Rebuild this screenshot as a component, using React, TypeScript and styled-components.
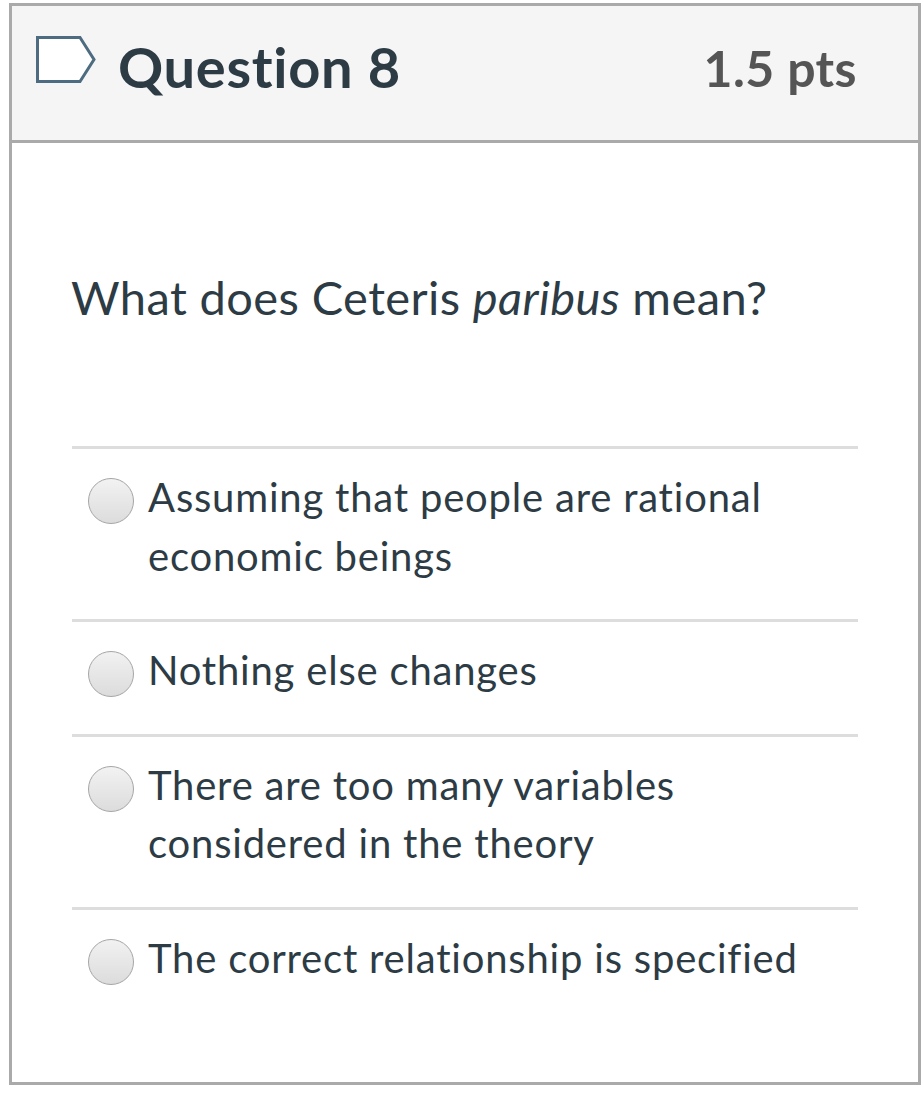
import styled, { createGlobalStyle } from "styled-components";

const GlobalStyle = createGlobalStyle`
  body {
    margin: 0;
    background: #fff;
    font-family: Lato, "Open Sans", sans-serif;
    color: #2d3b45;
  }
`;

const options = [
  "Assuming that people are rational economic beings",
  "Nothing else changes",
  "There are too many variables considered in the theory",
  "The correct relationship is specified",
];

const FlagIcon = () => (
  <FlagSvg width="60" height="47" viewBox="0 0 60 47">
    <path
      d="M1.5 1.5 H44 L58 23.5 L44 45.5 H1.5 Z"
      fill="#fff"
      stroke="#4d6c82"
      strokeWidth="3"
      strokeLinejoin="miter"
    />
  </FlagSvg>
);

const App = () => {
  return (
    <>
      <GlobalStyle />
      <Card>
        <Header>
          <FlagIcon />
          <Title>Question 8</Title>
          <Points>1.5 pts</Points>
        </Header>
        <Body>
          <QuestionText>
            What does Ceteris <em>paribus</em> mean?
          </QuestionText>
          <Answers>
            {options.map((option) => (
              <Answer key={option}>
                <Radio />
                <Label>{option}</Label>
              </Answer>
            ))}
          </Answers>
        </Body>
      </Card>
    </>
  );
};

const Card = styled.div`
  margin: 3px 0 0 9px;
  width: 912px;
  height: 1082px;
  box-sizing: border-box;
  border: 3px solid #aaaaaa;
  display: flex;
  flex-direction: column;
`;

const Header = styled.div`
  height: 137px;
  box-sizing: border-box;
  background: #f5f5f5;
  border-bottom: 3px solid #aaaaaa;
  display: flex;
  align-items: center;
  padding: 0 61px 10px 24px;
`;

const FlagSvg = styled.svg`
  flex: none;
  margin-bottom: 17px;
  margin-right: 22px;
`;

const Title = styled.div`
  font-size: 56px;
  font-weight: 700;
  line-height: 1;
  letter-spacing: 0.7px;
  color: #2d3b45;
  flex: 1;
  margin-bottom: 3px;
`;

const Points = styled.div`
  font-size: 50px;
  font-weight: 700;
  line-height: 1;
  letter-spacing: 0.4px;
  color: #555555;
`;

const Body = styled.div`
  padding: 120px 60px 0 60px;
`;

const QuestionText = styled.div`
  font-size: 47px;
  line-height: 69px;
  letter-spacing: 0.4px;
  margin-left: -1px;
  margin-bottom: 114px;
`;

const Answers = styled.div`
  display: flex;
  flex-direction: column;
`;

const Answer = styled.div`
  display: flex;
  align-items: flex-start;
  border-top: 3px solid #dddddd;
  padding: 19px 0 34px 16px;
`;

const Radio = styled.span`
  flex: none;
  width: 44px;
  height: 44px;
  margin-top: 10px;
  margin-right: 14px;
  border-radius: 50%;
  border: 1px solid #a5a5a5;
  background: linear-gradient(#f2f2f2, #dcdcdc);
`;

const Label = styled.div`
  font-size: 40px;
  line-height: 58.5px;
  letter-spacing: 0.8px;
  color: #2d3b45;
  max-width: 680px;
`;

export default App;
